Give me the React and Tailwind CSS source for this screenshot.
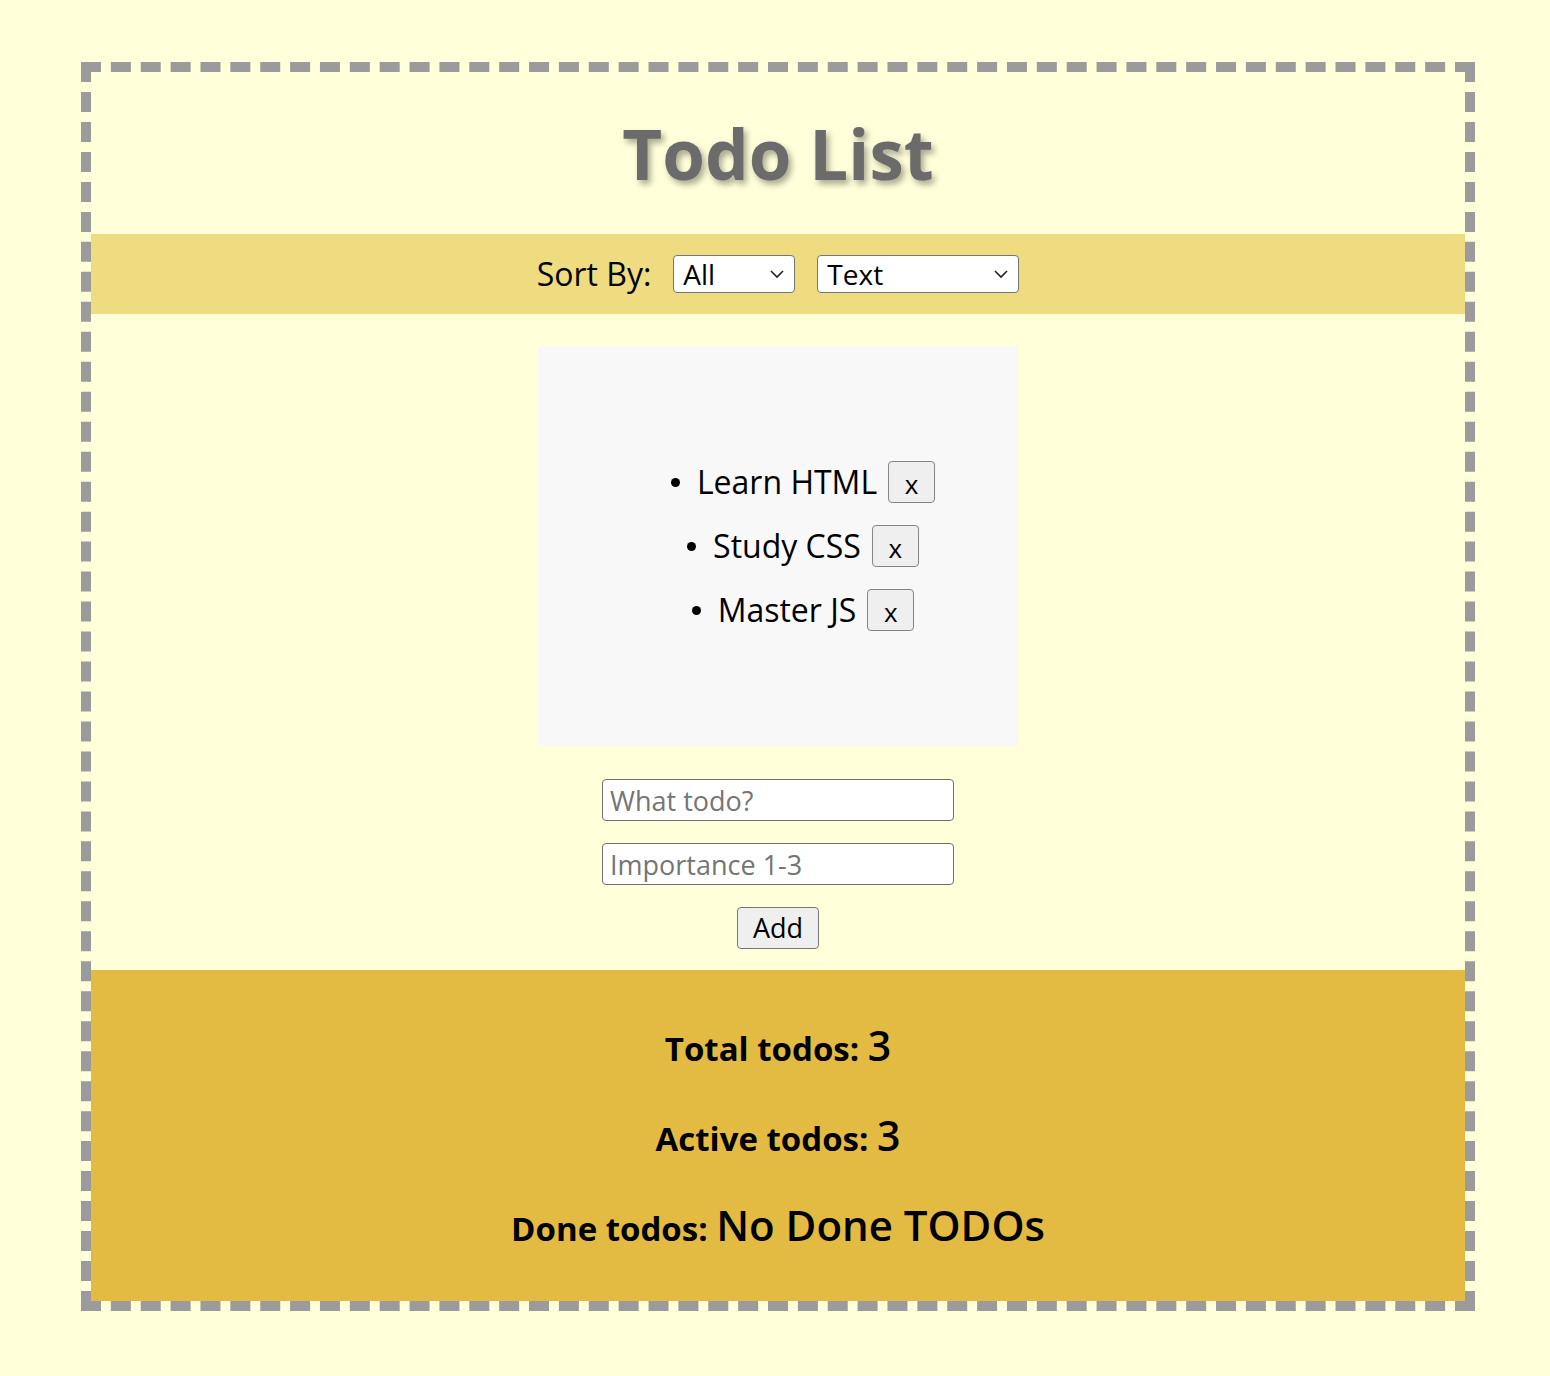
import React from "react";

const font = { fontFamily: '"Open Sans", "DejaVu Sans", sans-serif' };

function Chevron() {
  return (
    <svg width="16" height="10" viewBox="0 0 16 10" className="pointer-events-none absolute right-[10px] top-1/2 -translate-y-1/2">
      <path d="M2 2 L8 8 L14 2" fill="none" stroke="#222" strokeWidth="1.6" />
    </svg>
  );
}

function Select({ w, value }) {
  return (
    <div className={`relative ${w}`}>
      <select className="h-[38px] w-full appearance-none rounded-[4px] border border-[#767676] bg-white pl-[9px] text-[28px] leading-[36px] text-black outline-none" style={font} defaultValue={value}>
        <option>{value}</option>
      </select>
      <Chevron />
    </div>
  );
}

function Item({ text }) {
  return (
    <li className="flex items-center justify-center">
      <span className="mr-[17px] h-[9px] w-[9px] rounded-full bg-black" />
      <span className="text-[32px] leading-[40px] text-black">{text}</span>
      <button className="ml-[11px] h-[42px] w-[47px] rounded-[4px] border border-[#858585] bg-[#efefef] pt-[4px] text-[26px] leading-[36px] text-black" style={font}>x</button>
    </li>
  );
}

export default function App() {
  return (
    <div className="min-h-[1376px] bg-[#ffffda] pl-[81px] pt-[62px]" style={font}>
      <div className="w-[1394px] border-[10px] border-dashed border-[#9b9b9b]">
        <div className="flex h-[162px] items-center justify-center pt-[1px]">
          <h1 className="text-[69px] font-bold leading-none text-[#6b6b6b] [text-shadow:3px_4px_6px_rgba(0,0,0,0.35)]">Todo List</h1>
        </div>
        <div className="flex h-[80px] items-center justify-center bg-[#efdb80]">
          <span className="text-[32px] text-black">Sort By:</span>
          <div className="ml-[22px]"><Select w="w-[122px]" value="All" /></div>
          <div className="ml-[22px]"><Select w="w-[202px]" value="Text" /></div>
        </div>
        <div className="flex flex-col items-center pt-[32px] pb-[21px]">
          <div className="flex h-[400px] w-[480px] items-center justify-center bg-[#f8f8f8] pl-[50px]">
            <ul className="flex flex-col items-center gap-[22px]">
              <Item text="Learn HTML" />
              <Item text="Study CSS" />
              <Item text="Master JS" />
            </ul>
          </div>
          <div className="mt-[33px] flex flex-col items-center gap-[22px]">
            <input placeholder="What todo?" className="h-[42px] w-[352px] rounded-[4px] border border-[#707070] bg-white px-[7px] text-[27px] text-black placeholder:text-[#757575]" style={font} />
            <input placeholder="Importance 1-3" className="h-[42px] w-[352px] rounded-[4px] border border-[#707070] bg-white px-[7px] text-[27px] text-black placeholder:text-[#757575]" style={font} />
            <button className="h-[42px] w-[82px] rounded-[4px] border border-[#767676] bg-[#efefef] text-[27px] text-black" style={font}>Add</button>
          </div>
        </div>
        <div className="flex h-[331px] flex-col items-center bg-[#e3bb42] pt-[45px] text-black">
          <p className="flex h-[48px] items-baseline text-[33px] font-bold">Total todos:&nbsp;<span className="text-[41px] font-semibold">3</span></p>
          <p className="mt-[42px] flex h-[48px] items-baseline text-[33px] font-bold">Active todos:&nbsp;<span className="text-[41px] font-semibold">3</span></p>
          <p className="mt-[40px] flex h-[48px] items-baseline text-[33px] font-bold">Done todos:&nbsp;<span className="text-[42px] font-semibold">No Done TODOs</span></p>
        </div>
      </div>
    </div>
  );
}
